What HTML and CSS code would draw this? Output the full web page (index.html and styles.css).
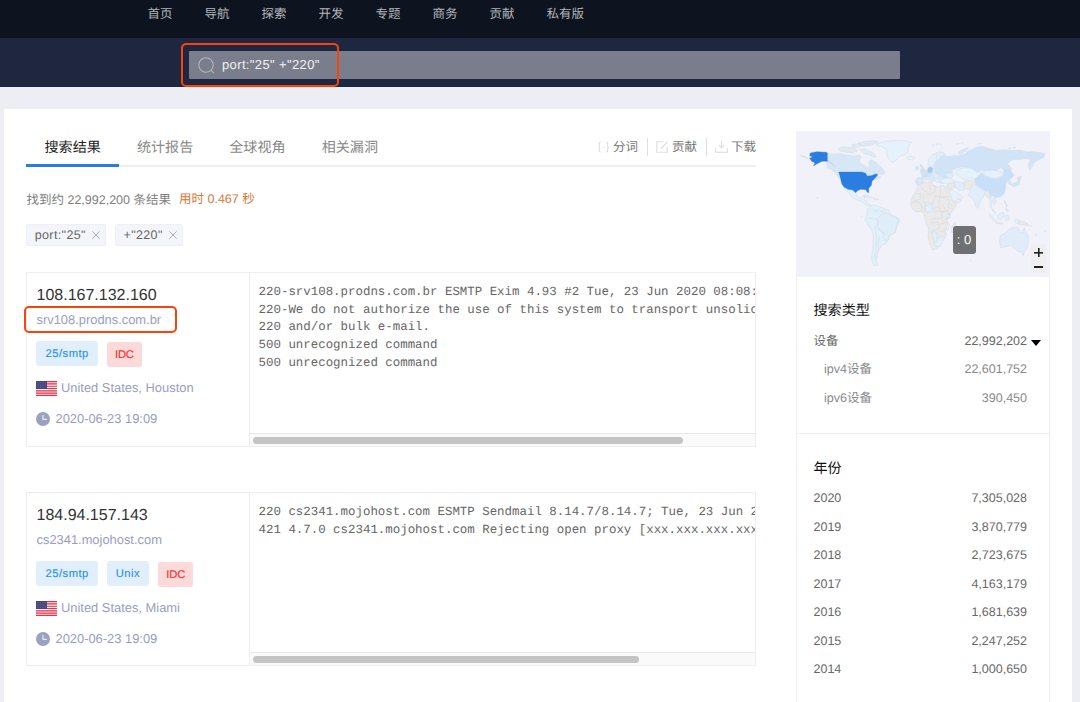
FILE: index.html
```
<!DOCTYPE html>
<html lang="zh-CN">
<head>
<meta charset="utf-8">
<title>搜索结果</title>
<link rel="stylesheet" href="styles.css">
</head>
<body>
<svg class="defs" width="0" height="0">
  <symbol id="flag" viewBox="0 0 21 15">
    <rect width="21" height="15" fill="#f7e9ec"/>
    <path d="M0 .6h21M0 2.9h21M0 5.2h21M0 7.5h21M0 9.8h21M0 12.1h21M0 14.4h21" stroke="#e0354a" stroke-width="1.15"/>
    <rect width="11" height="8" fill="#454680"/>
    <path d="M1 1.5h9M1 3.2h9M1 4.9h9M1 6.6h9" stroke="#8586ad" stroke-width=".5" stroke-dasharray=".7 .9"/>
  </symbol>
  <symbol id="clock" viewBox="0 0 14 14">
    <circle cx="7" cy="7" r="7" fill="#9aa1c1"/>
    <path d="M7 3v4.4h4" fill="none" stroke="#e8eaf3" stroke-width="1.2"/>
  </symbol>
  <symbol id="close" viewBox="0 0 8 8"><path d="M.4.4l7.2 7.2M7.6.4L.4 7.6" stroke="#a3a5aa" stroke-width=".9"/></symbol>
</svg>

<nav class="nav"><span>首页</span><span>导航</span><span>探索</span><span>开发</span><span>专题</span><span>商务</span><span>贡献</span><span>私有版</span></nav>
<header class="searchbar">
  <div class="search">
    <svg class="glass" viewBox="0 0 17 17"><circle cx="8" cy="8" r="7.2"/><path d="M12.8 13.2l3.3 3"/></svg>
    <span>port:"25" +"220"</span>
    <i class="mark mark-search"></i>
  </div>
</header>

<main class="panel">
  <section class="results">
    <div class="tabs">
      <span class="tab active">搜索结果</span><span class="tab">统计报告</span><span class="tab">全球视角</span><span class="tab">相关漏洞</span>
      <div class="tools">
        <span class="tool"><svg viewBox="0 0 13 12"><path d="M3.8 1H3.4Q2.4 1 2.4 2.4v1.8Q2.4 6 1.2 6 2.4 6 2.4 7.8v1.8q0 1.4 1 1.4h.4M9.2 1h.4q1 0 1 1.4v1.8q0 1.8 1.2 1.8-1.2 0-1.2 1.8v1.8q0 1.4-1 1.4h-.4M5.9 6h1.3"/></svg>分词</span>
        <span class="tool"><svg viewBox="0 0 13 12"><path d="M7.5 .8H.8v10.4h10.4V5.5M4.8 7.5L11.8 .8"/></svg>贡献</span>
        <span class="tool"><svg viewBox="0 0 13 12"><path d="M.7 7v4.3h11.6V7M6.5 0v6M4 4.3l2.5 2.4L9 4.3"/></svg>下载</span>
      </div>
    </div>
    <p class="count">找到约 22,992,200 条结果<span class="time">用时 0.467 秒</span></p>
    <div class="chips">
      <span class="chip">port:"25"<svg><use href="#close"/></svg></span>
      <span class="chip">+"220"<svg><use href="#close"/></svg></span>
    </div>

    <article class="card">
      <div class="info">
        <div class="ip">108.167.132.160</div>
        <div class="host">srv108.prodns.com.br<i class="mark mark-host"></i></div>
        <div class="tags"><span class="tag">25/smtp</span><span class="tag red">IDC</span></div>
        <div class="place"><svg class="flag"><use href="#flag"/></svg>United States, Houston</div>
        <div class="date"><svg class="clock"><use href="#clock"/></svg>2020-06-23 19:09</div>
      </div>
      <div class="banner">
        <pre>220-srv108.prodns.com.br ESMTP Exim 4.93 #2 Tue, 23 Jun 2020 08:08:
220-We do not authorize the use of this system to transport unsolic
220 and/or bulk e-mail.
500 unrecognized command
500 unrecognized command</pre>
        <div class="scroll"><div class="thumb"></div></div>
      </div>
    </article>

    <article class="card second">
      <div class="info">
        <div class="ip">184.94.157.143</div>
        <div class="host">cs2341.mojohost.com</div>
        <div class="tags"><span class="tag">25/smtp</span><span class="tag">Unix</span><span class="tag red">IDC</span></div>
        <div class="place"><svg class="flag"><use href="#flag"/></svg>United States, Miami</div>
        <div class="date"><svg class="clock"><use href="#clock"/></svg>2020-06-23 19:09</div>
      </div>
      <div class="banner">
        <pre>220 cs2341.mojohost.com ESMTP Sendmail 8.14.7/8.14.7; Tue, 23 Jun 2
421 4.7.0 cs2341.mojohost.com Rejecting open proxy [xxx.xxx.xxx.xxx</pre>
        <div class="scroll"><div class="thumb short"></div></div>
      </div>
    </article>
  </section>

  <aside class="side">
    <div class="map">
      <svg viewBox="17 18 763 438" preserveAspectRatio="none">
        <g stroke="#cfdbe6" stroke-width="1.6" stroke-linejoin="round">
          <!-- Canada and the Arctic islands -->
          <path fill="#d8e7f6" d="M111 84l18 4 20 -2 20 5 22 2 14-3 8 6-6 9 3 12 14 5 8 8 5-7-1-11 6-8 15 7 6 10 12 8 8 12-10 6-14 0 4 7 8 2-10 7-8-1-14 8-8 3-4-7-18-7H146l-10-13-12-13-13-4z"/>
          <path fill="#dfeaf5" d="M146 70l14-5 12 4 8-3 16 5 5 8-14 4-18-1-16-3-9-3zM185 59l18-3 12 5-10 5-16 0zM208 74l14-2 16 6 14 8 6 9-8 2-14-8-14-3zM204 54l20-5 26-2 14 3-12 6-14 5-18 3-12-4z"/>
          <path fill="#d8e7f6" d="M268 133l10 2 8 8-8 5-14-3z"/>
          <!-- Greenland, Iceland -->
          <path fill="#e5f1fb" d="M258 58l16-7 24-3 26-2 22 2 18 3-8 9-4 12 2 9-12 8-15 5-15 16-8 1-10-10-4-13-2-14-12-9-14-2z"/>
          <path fill="#e8f2fa" d="M348 97l8-3 14 1 5 4-8 5-12 0z"/>
          <!-- Mexico, Central America, Caribbean -->
          <path fill="#e5f1fa" d="M158 186l22 3 8 8 8 5 4 12 10 5 8-6 6 2-4 10 8 3 4 9 10 4-4 3-12-4-12-10-18-6-12-8-6-10-10-10z"/>
          <path fill="#eaf1f6" d="M219 211l14 1 13 6-9 1zM248 219l12 1 5 4-14 0z"/>
          <!-- South America -->
          <path fill="#e2f0fa" d="M245 240l14 2 22 8 16 8 4 11 24 12 2 10-8 13-4 18-14 9-8 15-8 10-10 4-8 12-5 10-2 14-3 10 6 14-12 2-7-18 2-27 3-42-4-18-13-18-8-17 6-10 2-19z"/>
          <path fill="#dfedf9" d="M263 279l14-14 20 1 5 5 23 10-7 24-4 17-16 10-10 18-12-14 4-9-18-23z"/>
          <path fill="#efeae4" d="M273 257l8-1 5 8-7 5-6-5z"/>
          <path fill="none" d="M244 252l16 8 5-8M233 278l18 5 10-4 0 22-8 9 6 24-6 72M259 310l12 8 13 10M268 334l-5 22 1 28"/>
          <!-- Europe -->
          <path fill="#e3effa" d="M412 118l4-18 12-12 18-8 14 2 4 14-6 20-12 7-8-2-4-8-8 13-8 0z"/>
          <path fill="#e0edf9" d="M381 158l18 0 14-16 10-11 16-2 16-4 14 5 16 12 4 12-10 6 2 11-14 1-12 4-16-5-8-6-4 6-12-8-10 2-8 8-16 6-6-8z"/>
          <path fill="#cfe2f8" d="M390 142l14-9 10 5 0 15-10 6-8-2zM388 116l6 4 6 10 2 7-12 2 3-10z"/>
          <path fill="#a7cbf2" d="M412 128l9-3 7 4-2 12-4 5-10-4z"/>
          <path fill="#d9e9fa" d="M380 160l18 1-4 16-12 4-3-8zM376 126l7-3 2 9-8 4zM414 146l10 3 10 15-4 2-11-9-6-3z"/>
          <path fill="none" d="M428 130l14 4 14-2M426 140l16 5 16-2M442 145l2 12 14-2M434 157l10 4 12 7M441 84l-4 30M448 82l3 24"/>
          <!-- Russia -->
          <path fill="#d1e4f7" d="M460 88l12 8 15-4 14 1 14-5 10-1 8-9 12-4 12-7 16-3 26 8 18 4 26-2 24 3 22-1 20 5 20-1 22 3 12 3-2 11-18 7-10 7-12 13-7 3 1-13 8-11-18-3-16 3-22 0-17 13 12 12 0 12-11 11-7-9-11-14-20 9-16 3-20-5-20 6-14-4-12-11-22 0-22 7-3 11-19 1 7 16-18-4-16-10-7-17 2-15z"/>
          <path fill="#dae8f7" d="M716 125l12-15 2 7-12 18zM502 84l12-10 20-6-6 8-18 10z"/>
          <!-- Central Asia, Middle East -->
          <path fill="#e4f2fa" d="M496 146l4-12 22-6 22 2 14 10 14 3-10 10-8 10-14-5-16 6-20-10zM449 166l17-7 18 1 7 9-17 6-22-2z"/>
          <path fill="#ebe9e7" d="M470 178l18-5 6 12-10 11-13-8zM522 169l18-3 12 4-8 12-10 13-14-7z"/>
          <path fill="#deedf9" d="M492 170l28 2 3 23-16 3-12-11z"/>
          <path fill="#e5f2fb" d="M470 194l14 0 18 10 14 12-6 10-20 9-8-12-6-16z"/>
          <path fill="#ececec" d="M491 228l18-7 3 7-17 9z"/>
          <!-- China, Mongolia, Japan -->
          <path fill="#e4f1fc" d="M578 139l24-4 30 3 4 11-14 10-20 0-18-9z"/>
          <path fill="#c9def7" d="M551 163l14-11 10-8 10 10 18 7 20 0 16-10-1-10 6-10 13 4 9 9 5 7-10 10-12 8-4 8 0 14-3 13-10 10-15 5-14-5-13-6-14-6-11-11-8-10z"/>
          <path fill="#d5e5f8" d="M660 177l12-2 10-8-2-9 10-5 3 5-6 12 0 9-18 6zM652 162l6 4 3 12-5 1-5-10z"/>
          <!-- India, South-East Asia -->
          <path fill="#e0edfa" d="M542 184l12-6 10 6 16 12 8 5-6 9-6 10-10 15-2 15-7-4-6-18-7-11-11-4 5-12z"/>
          <path fill="#ece9e7" d="M582 205l10-9 6 12 6 12-6 2-8-6z"/>
          <path fill="#e2effa" d="M600 212l12 2 5 16-5 9-7-14-2 22 12 18-7-7-9-14zM596 264l13 14 9 12-8-2-14-16zM618 292l20 3-4 3-16-3zM620 272l10-8 10-2-1 14-9 10-8-6zM646 270l10 3-2 12-8 3zM642 226l6 10 2 10-6-8zM644 248l10 8-6 3zM674 282l12 5 0 11-13-7z"/>
          <path fill="#ece9e7" d="M686 287l18 5 10 10-14-2-14-2z"/>
          <!-- Africa -->
          <path fill="#eaeaeb" d="M384 180l22-8 18-2 3 10 16 6 8-5 19 5 7 13 10 30 4 4 9-2-5 15-16 22-8 16 2 16-8 16 2 18-11 12-4 10-12 16-13 2-8-13-6-28 2-20-6-13-5-16-4-16-8-9-15 2-12-11-4-15 5-19 12-19z"/>
          <path fill="#e1eff9" d="M404 242l20-3 3 13-10 10-13-2zM470 266l10 2-1 10-11 2zM424 321l16 0 0 30-9-1zM438 345l18-13 6 8-12 23-14 2-5-12z"/>
          <path fill="#eaeaeb" d="M484 305l10-13 3 10-7 20-7 0z"/>
          <path fill="none" stroke="#d3d3d5" stroke-width="1.3" d="M388 184l28 26 18-10 0-20M416 172l4 24M450 184v30l28 1M376 206h14v16l-22 8M398 204l0 28 28 4 8-24M434 212l14 4-4 28-16 8M448 216l28 8-2 24 14 4M366 232l20 0 10 16M392 232l4 28M404 236v24M444 244l10 16 22-8M428 258l24 0 4 22-30 0M456 262l16-4 6 20-22 10M420 292l22 0 6 18-24 8M448 298l22-6 8 8-6 16-14-6M444 318l16 0 10 8M456 240l10 14M476 234l10 10"/>
          <!-- Australia, New Zealand -->
          <path fill="#e0ecfa" d="M630 331l14-6 14-14 16-5 9 3 2 9 12 7 4-17 6 14 8 16-4 28-9 14-17 1-12-12-12-8-17 4-13 4-4-18zM694 385l8 0-4 8zM744 357l8 9-7 8-4-6zM738 375l3 4-14 9-3-2z"/>
          <!-- United States -->
          <path fill="#2b7de0" stroke="#2b7de0" stroke-width="1" d="M60 84l20-4 28 2 3 2v25l-16 0-12 6-14 8 5-9-11-6-5-9 10-3-10-4zM145 141h69l12 4 4 8 12-1 16-6 4 4-11 13-6 5-2 13-8 9 0 13-5-2-3-7-16-1-10 4-5 6-9-8-14-2-12-7-7-10-5-22z"/>
          <path fill="none" stroke="#9bbfe2" d="M110 109l12 4 13 13M30 92l18 5 4 5M80 219h3M212 274h2M540 407h2M734 329l4 3M762 318h3"/>
          <path fill="none" stroke="#bfd0df" stroke-dasharray="9 4" d="M424 63l12-6 18 1M498 57l26-5M562 57l16-2M654 70l22-2M706 294l20 12"/>
        </g>
      </svg>
      <span class="tip">: 0</span>
      <div class="zoom"><i class="plus"></i><i class="minus"></i></div>
    </div>
    <section class="facet">
      <h3>搜索类型</h3>
      <div class="row open"><span>设备</span><span>22,992,202</span></div>
      <div class="row sub"><span>ipv4设备</span><span>22,601,752</span></div>
      <div class="row sub"><span>ipv6设备</span><span>390,450</span></div>
    </section>
    <section class="facet years">
      <h3>年份</h3>
      <div class="row"><span>2020</span><span>7,305,028</span></div>
      <div class="row"><span>2019</span><span>3,870,779</span></div>
      <div class="row"><span>2018</span><span>2,723,675</span></div>
      <div class="row"><span>2017</span><span>4,163,179</span></div>
      <div class="row"><span>2016</span><span>1,681,639</span></div>
      <div class="row"><span>2015</span><span>2,247,252</span></div>
      <div class="row"><span>2014</span><span>1,000,650</span></div>
    </section>
  </aside>
</main>
</body>
</html>
```
FILE: styles.css
```
* { box-sizing: border-box; }
html { height: 100%; overflow: hidden; }
body {
  margin: 0;
  height: 702px;
  overflow: hidden;
  display: flex;
  flex-direction: column;
  background: #edeef3;
  color: #686868;
  font: 12.5px/20px "Liberation Sans", "Noto Sans CJK SC", sans-serif;
  text-rendering: geometricPrecision;
}
.defs { display: none; }

.nav {
  flex: none;
  height: 38px;
  padding: 4px 0 0 147.5px;
  display: flex;
  gap: 32px;
  background: #0d1420;
  color: #b0b3b7;
}
.searchbar {
  flex: none;
  height: 49px;
  padding: 13px 0 0 188.6px;
  background: #1f2740;
}
.search {
  position: relative;
  width: 711.5px;
  height: 28px;
  padding-left: 9.9px;
  display: flex;
  align-items: center;
  gap: 6.5px;
  border-radius: 1px;
  background: #7a7d8b;
  color: #f0f1f3;
  font-size: 13px;
  letter-spacing: .37px;
}
.glass { width: 17px; height: 17px; fill: none; stroke: #b4b6be; stroke-width: 1.1; }

.mark { position: absolute; border: 2.6px solid #f7430d; border-radius: 5px; }
.mark-search { left: -7.6px; top: -8px; width: 158px; height: 43.5px; }
.mark-host { left: -12.5px; top: -4px; width: 153px; height: 27px; }

.panel {
  flex: 1;
  margin: 22px 8px 0 4.4px;
  padding: 22px 22px 0 22.1px;
  display: flex;
  justify-content: space-between;
  align-items: stretch;
  background: #fff;
}
.results { width: 729.5px; }

.tabs { display: flex; height: 36px; border-bottom: 2px solid #efeff0; font-size: 14.1px; }
.tab { width: 92.4px; height: 36px; padding-top: 6px; text-align: center; color: #888; }
.tab.active { color: #222; border-bottom: 3px solid #2b7de1; }
.tools { margin-left: auto; display: flex; align-items: center; height: 31px; font-size: 12.5px; color: #777; }
.tool { display: flex; align-items: center; gap: 2.5px; height: 18px; }
.tool + .tool { border-left: 1px solid #dedede; margin-left: 9.5px; padding-left: 8px; }
.tool svg { width: 13px; height: 12px; fill: none; stroke: #dcdde1; stroke-width: 1.1; }

.count { margin: 23px 0 0; display: flex; color: #808080; }
.time { margin: -1px 0 0 8px; color: #d6793c; }
.chips { display: flex; gap: 9px; margin-top: 14px; }
.chip {
  display: flex;
  align-items: center;
  gap: 6.2px;
  height: 22px;
  padding: 0 5.2px 0 7.2px;
  border: 1px solid #eff0f5;
  border-radius: 2px;
  background: #f4f5fa;
  color: #666;
  letter-spacing: .38px;
}
.chip svg { width: 8px; height: 8px; }

.card {
  display: flex;
  height: 175px;
  margin-top: 26px;
  border: 1px solid #eee;
}
.card.second { height: 174px; margin-top: 45px; }
.info { width: 222.5px; flex: none; padding: 13px 0 0 9px; border-right: 1px solid #eee; color: #989ebf; font-size: 12.9px; }
.ip { color: #333; font-size: 16px; }
.host { position: relative; margin-top: 4px; }
.tags { display: flex; gap: 9px; margin-top: 11px; font-size: 11.2px; line-height: 26px; }
.tag { height: 25px; padding: 0 9px; border-radius: 3px; background: #e1effd; color: #2b92ee; letter-spacing: .5px; -webkit-text-stroke: .15px; }
.tag.red { position: relative; top: .7px; padding: 0 8.2px; background: #fddada; color: #f5302d; letter-spacing: -.2px; }
.place { display: flex; align-items: center; gap: 3.5px; margin-top: 12px; }
.flag { width: 21px; height: 15px; }
.date { display: flex; align-items: center; gap: 5px; margin-top: 11px; }
.clock { width: 14px; height: 14px; }
.banner { flex: 1; min-width: 0; display: flex; flex-direction: column; }
.banner pre {
  flex: 1;
  margin: 0;
  padding: 10.8px 0 0 8.6px;
  overflow: hidden;
  color: #666;
  font: 12.43px/17.85px "Liberation Mono", monospace;
}
.scroll { height: 13px; padding: 2.5px 3.5px; background: #fafafa; border-top: 1px solid #e9e9e9; }
.thumb { width: 430px; height: 7.5px; border-radius: 4px; background: #c4c4c4; }
.thumb.short { width: 386px; }

.side { width: 254.5px; border: solid #f0f0f0; border-width: 0 1px; }
.map { position: relative; height: 146px; margin: 0 -1px; background: #f1f1fa; }
.map > svg { display: block; width: 100%; height: 100%; }
.tip {
  position: absolute;
  left: 157px;
  top: 95px;
  width: 23px;
  height: 28px;
  border-radius: 3px;
  background: #6f7073;
  color: #fff;
  font-size: 13px;
  line-height: 28px;
  text-align: center;
}
.zoom {
  position: absolute;
  right: 4px;
  bottom: 4px;
  width: 15px;
  height: 29px;
  display: grid;
  grid-template-rows: 1fr 1fr;
  place-items: center;
  background: #efefef;
}
.plus, .minus { width: 9px; height: 9px; margin-top: 3px; background: linear-gradient(#222, #222) center / 9px 2px no-repeat; }
.plus { background: linear-gradient(#222, #222) center / 9px 1.6px no-repeat, linear-gradient(#222, #222) center / 1.6px 9px no-repeat; }

.facet { padding: 23px 22px 20.5px 17px; border-bottom: 1px solid #eee; }
.facet h3 { margin: 0 0 6.7px; color: #111; font-size: 14.1px; font-weight: 400; line-height: 20px; }
.row { display: flex; justify-content: space-between; height: 28.5px; line-height: 28.5px; }
.open { position: relative; }
.open::after {
  content: "";
  position: absolute;
  right: -14px;
  top: 13px;
  border: 5px solid transparent;
  border-top: 6px solid #000;
  border-bottom: 0;
}
.sub { padding-left: 10.5px; color: #888; }
.years { border: 0; padding-top: 24px; }
```
